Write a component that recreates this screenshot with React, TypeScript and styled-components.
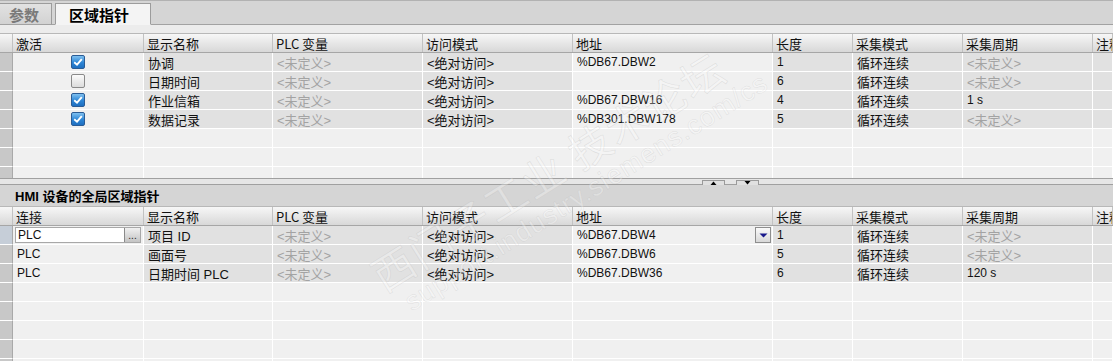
import React from 'react';
import styled, { createGlobalStyle } from 'styled-components';

const GlobalStyle = createGlobalStyle`
  html, body {
    margin: 0;
    padding: 0;
    background: #f0f0f0;
  }
  body {
    font-family: "Liberation Sans", "Noto Sans CJK SC", sans-serif;
    font-size: 12px;
    color: #000;
  }
`;

const COLS = '13px 131px 129px 150px 150px 200px 80px 110px 130px 1fr';

const Page = styled.div`
  position: relative;
  width: 1113px;
  height: 361px;
  overflow: hidden;
  background: #f0f0f0;
  display: flex;
  flex-direction: column;
`;

const TabBar = styled.div`
  height: 25px;
  box-sizing: border-box;
  background: #d5d5d5;
  border-top: 1px solid #b2b2b2;
  border-bottom: 1px solid #a2a2a2;
  display: flex;
  align-items: flex-end;
  gap: 3px;
  flex-shrink: 0;
`;

const Tab = styled.div<{ $active?: boolean }>`
  height: 22px;
  margin-bottom: -1px;
  box-sizing: border-box;
  padding: ${(p) => (p.$active ? '0 21px 0 13px' : '0 12px 0 9px')};
  display: flex;
  align-items: center;
  font-family: "Noto Sans CJK SC", sans-serif;
  font-weight: 700;
  font-size: 15px;
  color: ${(p) => (p.$active ? '#000' : '#7a7a7a')};
  background: ${(p) => (p.$active ? '#f4f4f4' : 'linear-gradient(#e2e2e2, #d2d2d2)')};
  border: 1px solid #9c9c9c;
  border-left: ${(p) => (p.$active ? '1px solid #9c9c9c' : 'none')};
  border-bottom: ${(p) => (p.$active ? '1px solid #f4f4f4' : '1px solid #a2a2a2')};
`;

const Spacer = styled.div`
  height: 8px;
  background: #ececec;
  flex-shrink: 0;
`;

const Table = styled.div<{ $height: number }>`
  height: ${(p) => p.$height}px;
  overflow: hidden;
  flex-shrink: 0;
  border-top: 1px solid #b8b8b8;
`;

const Row = styled.div`
  display: grid;
  grid-template-columns: ${COLS};
  height: 19px;
`;

const HeaderRow = styled(Row)`
  height: 18px;
  background: linear-gradient(#f7f7f7, #e4e4e4 60%, #d8d8d8);
  border-bottom: 1px solid #a6a6a6;
  box-sizing: content-box;
`;

const HeaderCell = styled.div`
  display: flex;
  align-items: center;
  padding: 0 3px;
  border-right: 1px solid #c2c2c2;
  white-space: nowrap;
  overflow: hidden;
  font-family: "Noto Sans CJK SC", sans-serif;
  font-size: 13px;
  color: #111;
`;

const RowHead = styled.div<{ $selected?: boolean }>`
  background: ${(p) => (p.$selected ? '#c6ced8' : '#c8c8c8')};
  border-bottom: 1px solid #fff;
  border-right: 1px solid #a9a9a9;
`;

const Cell = styled.div<{ $shade?: boolean; $muted?: boolean; $center?: boolean }>`
  position: relative;
  display: flex;
  align-items: center;
  justify-content: ${(p) => (p.$center ? 'center' : 'flex-start')};
  padding: 0 4px;
  box-sizing: border-box;
  background: ${(p) => (p.$shade ? '#e1e1e1' : '#f0f0f0')};
  border-right: 1px solid #fff;
  border-bottom: 1px solid #fff;
  white-space: nowrap;
  overflow: hidden;
  font-family: "Liberation Sans", "Noto Sans CJK SC", sans-serif;
  font-size: 12px;
  color: ${(p) => (p.$muted ? '#a3a3a3' : '#111')};

  &:lang(zh) {
    font-size: 13px;
  }
`;

const Check = styled.span<{ $on: boolean }>`
  width: 14px;
  height: 14px;
  box-sizing: border-box;
  border-radius: 2px;
  border: 1px solid ${(p) => (p.$on ? '#2a5c96' : '#8a8a8a')};
  background: ${(p) =>
    p.$on ? 'linear-gradient(#7ec0f0, #2d86d6 55%, #1f6fc0)' : 'linear-gradient(#fbfbfb, #dcdcdc)'};
  display: flex;
  align-items: center;
  justify-content: center;
`;

const Splitter = styled.div`
  height: 7px;
  flex-shrink: 0;
  box-sizing: border-box;
  border-top: 1px solid #a0a0a0;
  border-bottom: 1px solid #a0a0a0;
  background: #e6e6e6;
  display: flex;
  justify-content: flex-start;
  gap: 11px;
  padding-left: 702px;
`;

const SplitButton = styled.div`
  width: 23px;
  height: 5px;
  margin-top: 1px;
  box-sizing: border-box;
  border: 1px solid #9a9a9a;
  border-bottom: none;
  background: #e0e0e0;
  display: flex;
  align-items: center;
  justify-content: center;
`;

const SectionTitle = styled.div`
  height: 21px;
  flex-shrink: 0;
  background: #d5d5d5;
  display: flex;
  align-items: center;
  padding-left: 15px;
  font-family: "Liberation Sans", "Noto Sans CJK SC", sans-serif;
  font-weight: 700;
  font-size: 13px;
  color: #000;
`;

const InputBox = styled.div`
  position: absolute;
  left: 2px;
  right: 2px;
  top: 1px;
  bottom: 1px;
  background: #fff;
  border: 1px solid #a8a8a8;
  display: flex;
  align-items: center;
  padding-left: 2px;
`;

const DotsButton = styled.div`
  margin-left: auto;
  width: 16px;
  height: 100%;
  box-sizing: border-box;
  border-left: 1px solid #8a8a8a;
  background: linear-gradient(#f0f0f0, #c4c4c4);
  display: flex;
  align-items: flex-end;
  justify-content: center;
  font-size: 10px;
  line-height: 12px;
  color: #222;
`;

const DropButton = styled.div`
  position: absolute;
  right: 1px;
  top: 1px;
  width: 16px;
  height: 16px;
  box-sizing: border-box;
  border: 1px solid #8e8e8e;
  background: linear-gradient(#fafafa, #d8d8d8);
  display: flex;
  align-items: center;
  justify-content: center;
`;

const Watermark = styled.div`
  position: absolute;
  left: 362px;
  top: 258px;
  transform: rotate(-32deg);
  transform-origin: left top;
  pointer-events: none;
  display: flex;
  flex-direction: column;
`;

const WatermarkBig = styled.div`
  font-family: "Noto Sans CJK SC", sans-serif;
  font-size: 42px;
  line-height: 48px;
  letter-spacing: 2px;
  color: rgba(255, 255, 255, 0.3);
  -webkit-text-stroke: 0.6px rgba(170, 170, 170, 0.28);
  white-space: nowrap;
`;

const WatermarkSmall = styled.div`
  font-family: "Liberation Sans", sans-serif;
  font-size: 27px;
  line-height: 30px;
  letter-spacing: 1px;
  color: rgba(255, 255, 255, 0.3);
  -webkit-text-stroke: 0.5px rgba(170, 170, 170, 0.28);
  white-space: nowrap;
  padding-left: 14px;
`;

const headersTop = ['激活', '显示名称', 'PLC 变量', '访问模式', '地址', '长度', '采集模式', '采集周期', '注释'];
const headersBottom = ['连接', '显示名称', 'PLC 变量', '访问模式', '地址', '长度', '采集模式', '采集周期', '注释'];

// columns 0 and 4 are editable (light), rest read-only (gray)
const shaded = [false, true, true, true, false, true, true, true, true];

type TopRow = { on: boolean; cells: string[] };

const topRows: TopRow[] = [
  { on: true, cells: ['协调', '<未定义>', '<绝对访问>', '%DB67.DBW2', '1', '循环连续', '<未定义>', ''] },
  { on: false, cells: ['日期时间', '<未定义>', '<绝对访问>', '', '6', '循环连续', '<未定义>', ''] },
  { on: true, cells: ['作业信箱', '<未定义>', '<绝对访问>', '%DB67.DBW16', '4', '循环连续', '1 s', ''] },
  { on: true, cells: ['数据记录', '<未定义>', '<绝对访问>', '%DB301.DBW178', '5', '循环连续', '<未定义>', ''] },
];

const bottomRows: string[][] = [
  ['PLC', '项目 ID', '<未定义>', '<绝对访问>', '%DB67.DBW4', '1', '循环连续', '<未定义>', ''],
  ['PLC', '画面号', '<未定义>', '<绝对访问>', '%DB67.DBW6', '5', '循环连续', '<未定义>', ''],
  ['PLC', '日期时间 PLC', '<未定义>', '<绝对访问>', '%DB67.DBW36', '6', '循环连续', '120 s', ''],
];

const isCjk = (s: string) => /[\u4e00-\u9fff]/.test(s);

const CheckMark = () => (
  <svg width="10" height="8" viewBox="0 0 10 8">
    <path d="M1.2 4.2 L4 6.6 L8.8 1.2" fill="none" stroke="#fff" strokeWidth="1.9" />
  </svg>
);

const Header: React.FC<{ labels: string[] }> = ({ labels }) => (
  <HeaderRow>
    <HeaderCell />
    {labels.map((l) => (
      <HeaderCell key={l}>{l}</HeaderCell>
    ))}
  </HeaderRow>
);

const EmptyRow: React.FC = () => (
  <Row>
    <RowHead />
    {shaded.map((_, i) => (
      <Cell key={i} />
    ))}
  </Row>
);

const TextCell: React.FC<{ text: string; col: number }> = ({ text, col }) => (
  <Cell
    $shade={shaded[col]}
    $muted={text === '<未定义>'}
    lang={isCjk(text) ? 'zh' : undefined}
  >
    {text}
  </Cell>
);

const App: React.FC = () => {
  return (
    <>
      <GlobalStyle />
      <Page>
        <TabBar>
          <Tab>参数</Tab>
          <Tab $active>区域指针</Tab>
        </TabBar>
        <Spacer />

        <Table $height={144}>
          <Header labels={headersTop} />
          {topRows.map((r, ri) => (
            <Row key={ri}>
              <RowHead />
              <Cell $center>
                <Check $on={r.on}>{r.on && <CheckMark />}</Check>
              </Cell>
              {r.cells.map((c, ci) => (
                <TextCell key={ci} text={c} col={ci + 1} />
              ))}
            </Row>
          ))}
          <EmptyRow />
          <EmptyRow />
          <EmptyRow />
        </Table>

        <Splitter>
          <SplitButton>
            <svg width="7" height="4" viewBox="0 0 7 4">
              <path d="M0.5 4 L3.5 0.5 L6.5 4 Z" fill="#000" />
            </svg>
          </SplitButton>
          <SplitButton>
            <svg width="7" height="4" viewBox="0 0 7 4">
              <path d="M0.5 0 L3.5 3.5 L6.5 0 Z" fill="#000" />
            </svg>
          </SplitButton>
        </Splitter>

        <SectionTitle>HMI 设备的全局区域指针</SectionTitle>

        <Table $height={160}>
          <Header labels={headersBottom} />
          {bottomRows.map((r, ri) => (
            <Row key={ri}>
              <RowHead $selected={ri === 0} />
              {r.map((c, ci) => {
                if (ri === 0 && ci === 0) {
                  return (
                    <Cell key={ci}>
                      <InputBox>
                        {c}
                        <DotsButton>...</DotsButton>
                      </InputBox>
                    </Cell>
                  );
                }
                if (ri === 0 && ci === 4) {
                  return (
                    <Cell key={ci}>
                      {c}
                      <DropButton>
                        <svg width="9" height="5" viewBox="0 0 9 5">
                          <path d="M0.5 0.5 L8.5 0.5 L4.5 4.5 Z" fill="#1a1a8c" />
                        </svg>
                      </DropButton>
                    </Cell>
                  );
                }
                return <TextCell key={ci} text={c} col={ci} />;
              })}
            </Row>
          ))}
          <EmptyRow />
          <EmptyRow />
          <EmptyRow />
          <EmptyRow />
          <EmptyRow />
        </Table>

        <Watermark>
          <WatermarkBig>西门子工业 技术论坛</WatermarkBig>
          <WatermarkSmall>support.industry.siemens.com/cs</WatermarkSmall>
        </Watermark>
      </Page>
    </>
  );
};

export default App;
